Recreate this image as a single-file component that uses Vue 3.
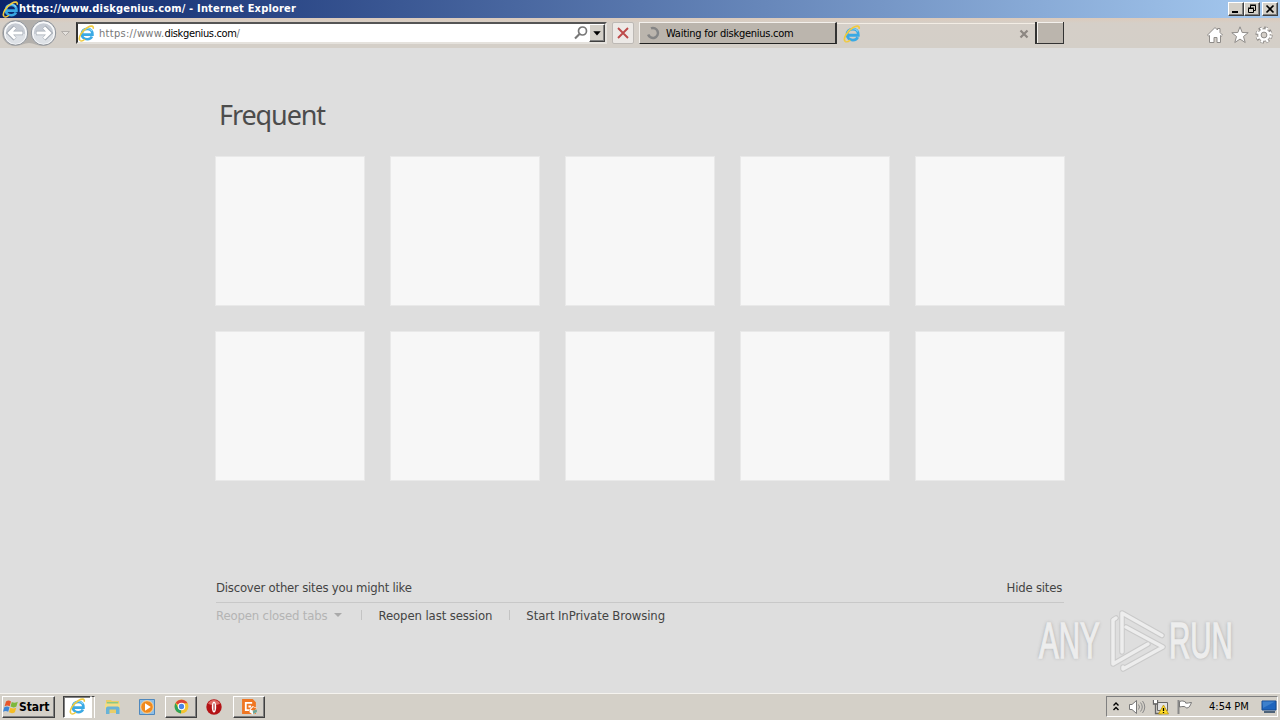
<template>
  <div class="screen">
    <svg class="defs" aria-hidden="true">
      <symbol id="ie" viewBox="0 0 16 16">
        <path d="M4 9.100h9.600C13.800 5.500 11.800 3.600 8.800 3.600c-3 0-5.200 2.100-5.200 4.900 0 3 2.200 4.900 5.200 4.900 2.100 0 3.600-.9 4.300-2.500" fill="none" stroke="#3aa9e4" stroke-width="2.500" />
        <path d="M4.200 6.300C5 4.500 6.700 3.300 8.800 3.300s3.600.9 4.300 2.400" fill="none" stroke="#8bd6f7" />
        <path d="M2 14.600C-.4 12.500 3.500 5.500 9 2.300c3-1.800 6-1.900 5.300 1.200" fill="none" stroke="#f0ca3e" stroke-width="1.500" />
        <path d="M2 14.600c1 .8 3 0 4.500-1.200" fill="none" stroke="#f0ca3e" stroke-width="1.300" />
      </symbol>
    </svg>

    <header class="title-bar">
      <svg class="title-icon"><use href="#ie" /></svg>
      <span class="title-text">https://www.diskgenius.com/ - Internet Explorer</span>
      <div class="window-buttons">
        <button><svg viewBox="0 0 14 12"><path d="M3 9h6" stroke="#000" stroke-width="2" /></svg></button>
        <button>
          <svg viewBox="0 0 14 12">
            <path d="M5.500 5V2.500h5v5H9M5 2h6M3.500 5.500h5v4h-5zM3 5h6" fill="none" stroke="#000" />
          </svg>
        </button>
        <button class="close"><svg viewBox="0 0 14 12"><path d="M3.500 2.500l7 7M10.500 2.500l-7 7" stroke="#000" stroke-width="1.700" /></svg></button>
      </div>
    </header>

    <nav class="toolbar">
      <svg class="nav-buttons" width="74" height="30" viewBox="0 0 74 30">
        <path d="M15 2h28a13 13 0 0 1 0 26c-6 0-9-3-14-3s-8 3-14 3a13 13 0 0 1 0-26z" fill="#b3b0ac" />
        <g v-for="cx in [15.5, 43.5]" :key="cx">
          <circle :cx="cx" cy="15" r="12.200" fill="#e9ebee" stroke="#8d9299" />
          <circle :cx="cx" cy="15" r="10.500" fill="#c6cbd3" stroke="#f8f9fa" stroke-width="1.500" />
          <path :d="`M${cx - 10} 16a10 10 0 0 0 20 0z`" fill="#dde1e6" />
        </g>
        <path d="M15 9l-6 6 6 6M9.500 15H23M44 9l6 6-6 6M49.500 15H36" fill="none" stroke="#a3aab3" stroke-width="4.400" />
        <path d="M15 9.500L9.500 15l5.500 5.500M10 15h12.500M44 9.500l5.500 5.500-5.500 5.500M49 15H36.500" fill="none" stroke="#fff" stroke-width="3" />
        <path d="M61.500 13.500h8l-4 4z" fill="#e5e2de" stroke="#b2aeaa" />
      </svg>

      <div class="address">
        <svg class="page-icon"><use href="#ie" /></svg>
        <span class="url">https://www.<b>diskgenius.com</b>/</span>
        <svg class="search" viewBox="0 0 16 16">
          <circle cx="9.500" cy="6" r="4" fill="none" stroke="#777" stroke-width="1.700" />
          <path d="M6.500 9L2 13.500" stroke="#777" stroke-width="2.200" />
        </svg>
        <button class="drop"><svg viewBox="0 0 12 14"><path d="M2.500 5h7L6 8.800z" /></svg></button>
      </div>

      <div class="stop">
        <svg viewBox="0 0 20 20"><path d="M5 5l10 10M15 5L5 15" stroke="#bd4a4a" stroke-width="1.900" /></svg>
      </div>

      <div class="tab waiting">
        <svg class="spinner" viewBox="0 0 14 14">
          <path d="M5 2.400A5 5 0 1 1 2.200 8.500" fill="none" stroke="#858585" stroke-width="2.500" />
        </svg>
        <span>Waiting for diskgenius.com</span>
      </div>
      <div class="tab current">
        <svg class="tab-icon"><use href="#ie" /></svg>
        <svg class="tab-close" viewBox="0 0 10 10"><path d="M1.500 1.500l7 7M8.500 1.500l-7 7" stroke="#8c8782" stroke-width="2.200" /></svg>
      </div>
      <div class="new-tab"></div>

      <div class="tools">
        <svg viewBox="0 0 18 18">
          <path d="M1.500 9L9 1.500l2.500 2.500V2.500H14v4L16.500 9l-1.200 1.200-.8-.7v7H11v-5H8v5H3.500v-7l-.8.700z" fill="#fff" stroke="#8e8b88" />
        </svg>
        <svg viewBox="0 0 18 18">
          <path d="M9 .8l2.200 5.700 6 .2-4.700 3.800 1.700 6L9 13.100l-5.200 3.400 1.700-6L.8 6.700l6-.2z" fill="#fff" stroke="#8e8b88" />
        </svg>
        <svg viewBox="0 0 18 18">
          <circle cx="9" cy="9" r="6.800" fill="none" stroke="#8e8b88" stroke-width="3.600" stroke-dasharray="3.200 2.140" />
          <circle cx="9" cy="9" r="6.300" fill="#fff" stroke="#8e8b88" />
          <circle cx="9" cy="9" r="6.600" fill="none" stroke="#fff" stroke-width="2.600" stroke-dasharray="2.200 3.140" stroke-dashoffset="-.5" />
          <circle cx="9" cy="9" r="2.900" fill="#d4cfc8" stroke="#8e8b88" />
        </svg>
      </div>
    </nav>

    <main class="page">
      <h1>Frequent</h1>
      <div class="tiles">
        <div v-for="n in 10" :key="n" class="tile"></div>
      </div>
      <div class="discover">
        <span>Discover other sites you might like</span>
        <span class="hide">Hide sites</span>
      </div>
      <div class="links">
        <span class="disabled">Reopen closed tabs</span>
        <i class="arrow"></i>
        <i class="separator"></i>
        <span>Reopen last session</span>
        <i class="separator"></i>
        <span>Start InPrivate Browsing</span>
      </div>

      <div class="watermark">
        <span class="any">ANY</span>
        <svg width="60" height="66" viewBox="0 0 60 66">
          <g fill="none" stroke-linejoin="round" stroke-linecap="round">
            <g class="edge">
              <path d="M14 44V5l40 22.500" />
              <path d="M8 10l-3 2v44l35-20" />
              <path d="M18 19l37 20-40 22v-2" />
            </g>
            <g class="line">
              <path d="M14 44V5l40 22.500" />
              <path d="M8 10l-3 2v44l35-20" />
              <path d="M18 19l37 20-40 22v-2" />
            </g>
          </g>
        </svg>
        <span class="run">RUN</span>
      </div>
    </main>

    <footer class="taskbar">
      <button class="start">
        <svg viewBox="0 0 16 16">
          <path d="M3 2.500C5 1 6.500 1.500 8 2.500L6.700 7.300C5 6.300 3.500 6.300 1.600 7.300z" fill="#e8562a" />
          <path d="M8.800 3c1.700 1 3.600 1 6-.2l-1.400 4.800c-2.200 1.200-4 1-5.900 0z" fill="#7db83a" />
          <path d="M1.300 8.300c1.800-1 3.500-1 5.200 0l-1.300 4.500c-1.700-1-3.400-1-5.200 0z" fill="#3e86d6" />
          <path d="M7.300 8.700c2 1 3.700 1 5.900 0l-1.300 4.600c-2.200 1.200-4 1-5.900 0z" fill="#f5bd25" />
        </svg>
        Start
      </button>
      <div class="task pressed"><svg><use href="#ie" /></svg></div>
      <i class="stack"></i>
      <svg class="explorer" viewBox="0 0 18 18">
        <path d="M2 2h5l1 1h7v12H2z" fill="#e9cd68" />
        <path d="M3 4h11v3H3z" fill="#8dc980" />
        <path d="M1 5.500h15V11H1z" fill="#f3dc88" />
        <path d="M2 16v-5.500C2 9 3 8.500 5 8.500h7.500c2 0 3 .5 3 2V16H12v-4.500H5.500V16z" fill="#68b3d8" />
      </svg>
      <svg class="media" viewBox="0 0 18 18">
        <path d="M1.500 1.500h15v15h-15z" fill="#8fbfe6" stroke="#4f88bd" />
        <circle cx="9" cy="9" r="6.300" fill="#f08a1d" stroke="#fbd7a1" />
        <path d="M7 5.300v7.400L12.800 9z" fill="#fff" />
      </svg>
      <div class="task">
        <svg viewBox="0 0 16 16">
          <circle cx="8" cy="8" r="6.500" fill="#f4c430" />
          <path d="M8 8L2.400 4.700A6.500 6.500 0 0 1 13.700 5H8z" fill="#dc4437" />
          <path d="M8 8l-.5 6.500A6.500 6.500 0 0 1 2.400 4.700L5 9.500z" fill="#2da35a" />
          <circle cx="8" cy="8" r="3" fill="#4b86e8" stroke="#fff" />
        </svg>
      </div>
      <svg class="opera" viewBox="0 0 18 18">
        <circle cx="9" cy="9" r="7.700" fill="#b41316" />
        <path d="M3 5.500a7 7 0 0 1 12 0c-3 2-9 2-12 0z" fill="#df6963" />
        <ellipse cx="9" cy="9" rx="2.200" ry="5.500" fill="#fff" />
        <path d="M9 5.500v7" stroke="#a51013" />
      </svg>
      <div class="task last">
        <svg viewBox="0 0 16 16">
          <path d="M1 1h10l3 3v11H1z" fill="#ef7622" />
          <path d="M10.500 4.500H4.500v7h3M7 8h2.500" fill="none" stroke="#fff" stroke-width="1.700" />
          <path d="M8 10.500l3-3 4 2v4l-4 2-3-2z" fill="#fff" />
          <path d="M9 11l2.500-2.500L15 10l-3 2z" fill="#ef7622" />
          <path d="M11 12l4-1.500v3L11.500 15z" fill="#70a596" />
        </svg>
      </div>

      <div class="tray">
        <svg class="chevrons" viewBox="0 0 8 12"><path d="M1.500 4.500L4 2l2.500 2.500M1.500 9L4 6.500 6.500 9" fill="none" stroke="#000" stroke-width="1.400" /></svg>
        <svg class="speaker" viewBox="0 0 18 16">
          <path d="M1.500 5.500H4l4.500-4v13L4 10.500H1.500z" fill="#fff" stroke="#777" />
          <path d="M10.500 5.500q2 2.500 0 5M12.500 3.500q3.500 4.500 0 9M14.500 2q4.500 6 0 12" fill="none" stroke="#888" />
        </svg>
        <svg class="network" viewBox="0 0 18 16">
          <path d="M5.500 3.500h10v8h-10z" fill="#e3e3e3" stroke="#666" />
          <path d="M1.500 1v4h4V1M3.500 5v9.500h6" fill="none" stroke="#666" stroke-width="1.300" />
          <path d="M2 1h3v3H2z" fill="#fff" />
          <path d="M11.500 6l5 9h-10z" fill="#ffdc28" stroke="#b38a00" stroke-width=".7" />
          <path d="M11.500 9v3M11.500 13v1" stroke="#000" stroke-width="1.300" />
        </svg>
        <svg class="flag" viewBox="0 0 18 16">
          <path d="M2.500 1v14" stroke="#888" stroke-width="2" />
          <path d="M3.500 2.500c3-1 4-.5 6 .5v1c2 .5 4-.5 6-.5-1 2-2 5.500-4.500 5.500-1.500 0-1.500-1.500-3-1.500s-3 0-4.500.5z" fill="#fff" stroke="#777" />
        </svg>
        <span class="clock">4:54 PM</span>
        <svg class="desktop" viewBox="0 0 16 14">
          <path d="M1 1h14v9H1z" fill="#1f65bd" stroke="#174a8e" />
          <path d="M1.500 1.500H14L2 8z" fill="#3d80cc" />
          <path d="M3 12h11" stroke="#4d6278" stroke-width="2" />
        </svg>
      </div>
    </footer>
  </div>
</template>

<script setup>
</script>

<style>
body {
  margin: 0;
  overflow: hidden;
}
</style>

<style scoped>
.screen {
  width: 1280px;
  height: 720px;
  display: flex;
  flex-direction: column;
  background: #dedede;
  color: #000;
  font-family: "DejaVu Sans Condensed", "DejaVu Sans", sans-serif;
  font-stretch: condensed;
  font-size: 11px;
  white-space: nowrap;
}

.screen * {
  box-sizing: border-box;
}

svg {
  display: block;
  flex: none;
}

.defs {
  position: absolute;
  width: 0;
  height: 0;
}

button {
  padding: 0;
  margin: 0;
  font-family: inherit;
  background: #d4d0c8;
  border: 1px solid;
  border-color: #fff #404040 #404040 #fff;
  box-shadow: inset -1px -1px #808080;
}

.title-bar {
  height: 18px;
  flex: none;
  display: flex;
  align-items: center;
  padding: 0 2px;
  background: linear-gradient(90deg, #0a246a, #a6caf0);
}

.title-icon {
  width: 17px;
  height: 17px;
}

.title-text {
  color: #fff;
  font-weight: bold;
  letter-spacing: 0.18px;
  line-height: 18px;
}

.window-buttons {
  margin-left: auto;
  display: flex;
}

.window-buttons button {
  width: 16px;
  height: 14px;
}

.window-buttons svg {
  width: 14px;
  height: 12px;
}

.window-buttons .close {
  margin-left: 2px;
}

.toolbar {
  height: 30px;
  flex: none;
  display: flex;
  background: linear-gradient(#dccabb, #d5cfc8 5px, #d4cfc8);
}

.address {
  width: 531px;
  height: 22px;
  margin: 4px 0 0 2px;
  display: flex;
  align-items: center;
  background: #fff;
  border: 2px solid;
  border-color: #555 #e5e2dd #e5e2dd #333;
}

.page-icon {
  width: 17px;
  height: 17px;
}

.url {
  margin-left: 4px;
  color: #777;
  letter-spacing: 0.3px;
}

.url b {
  color: #000;
  font-weight: normal;
  letter-spacing: -0.36px;
}

.search {
  width: 16px;
  height: 16px;
  margin-left: auto;
}

.drop {
  width: 16px;
  height: 18px;
}

.drop svg {
  width: 14px;
  height: 15px;
}

.stop {
  width: 22px;
  height: 22px;
  margin: 4px 0 0 5px;
  background: #ece9e6;
  border: 1px solid #bdb9b5;
  border-radius: 2px;
}

.stop svg {
  width: 20px;
  height: 20px;
}

.tab {
  display: flex;
  align-items: center;
}

.waiting {
  width: 198px;
  height: 22px;
  margin: 4px 0 0 5px;
  padding-left: 6px;
  background: #bbb5ad;
  border: solid;
  border-width: 1px 2px 1px 1px;
  border-color: #f3f0ec #333 #222 #f3f0ec;
  letter-spacing: -0.25px;
}

.spinner {
  width: 14px;
  height: 14px;
  margin-right: 6px;
}

.current {
  width: 198px;
  height: 21px;
  margin-top: 5px;
  padding-left: 6px;
  border-top: 1px solid #f3ede5;
}

.tab-icon {
  width: 18px;
  height: 18px;
}

.tab-close {
  width: 10px;
  height: 10px;
  margin: 0 6px 0 auto;
}

.new-tab {
  width: 29px;
  height: 22px;
  margin-top: 4px;
  background: #bbb5ad;
  border: solid #333;
  border-width: 0 1px 1px 2px;
  box-shadow: inset 1px 1px #f3f0ec;
}

.tools {
  margin: 8px 7px 0 auto;
  display: flex;
  gap: 6.500px;
}

.tools svg {
  width: 18px;
  height: 18px;
}

.page {
  flex: 1;
  min-height: 0;
  position: relative;
  padding: 48px 216px 0;
  color: #444;
}

h1 {
  margin: 0 0 0 3px;
  height: 61px;
  font-family: "Noto Sans", sans-serif;
  font-stretch: normal;
  font-weight: normal;
  font-size: 27px;
  letter-spacing: -1.1px;
  line-height: 38px;
  color: #4c4c4c;
}

.tiles {
  display: grid;
  grid-template-columns: repeat(5, 148px);
  grid-auto-rows: 148px;
  gap: 27px;
}

.tile {
  background: #f7f7f7;
  box-shadow: 0 0 0 1px #e9e9e9;
}

.discover {
  height: 25px;
  margin-top: 98px;
  display: flex;
  justify-content: space-between;
  font-size: 13px;
  letter-spacing: -0.22px;
  line-height: 20px;
  border-bottom: 1px solid #c8c8c8;
}

.hide {
  margin-right: 2px;
}

.links {
  display: flex;
  align-items: center;
  height: 24px;
  font-size: 13px;
  letter-spacing: -0.1px;
}

.disabled {
  color: #b4b4b4;
  letter-spacing: -0.15px;
}

.arrow {
  margin: 0 2px 0 7px;
  border: 4px solid transparent;
  border-top-color: #aaa;
  border-bottom: 0;
}

.separator {
  width: 1px;
  height: 10px;
  margin: 0 16px 0 17px;
  background: #c3c3c3;
}

.watermark {
  position: absolute;
  left: 1039px;
  top: 560px;
  height: 66px;
  display: flex;
  align-items: center;
  font-family: "Liberation Sans", sans-serif;
  font-stretch: normal;
  font-size: 50px;
  color: #ededed;
  -webkit-text-stroke: 1.5px #ededed;
  text-shadow: 0 0 5px #999;
}

.watermark span {
  transform: scaleX(0.59);
  transform-origin: left;
}

.any {
  width: 69px;
}

.run {
  width: 65px;
  margin-left: 1px;
}

.edge {
  stroke: #cacaca;
  stroke-width: 5.500;
}

.line {
  stroke: #ededed;
  stroke-width: 3.500;
}

.taskbar {
  height: 27px;
  flex: none;
  display: flex;
  align-items: center;
  padding: 1px 2px 2px;
  background: #d4d0c8;
  border-top: 1px solid #f5f3ef;
}

.start {
  width: 53px;
  height: 22px;
  display: flex;
  align-items: center;
  padding-left: 0;
  font-size: 12px;
  font-weight: bold;
  letter-spacing: -0.1px;
}

.start svg {
  width: 16px;
  height: 16px;
}

.task {
  width: 32px;
  height: 22px;
  display: flex;
  align-items: center;
  justify-content: center;
  border: 1px solid;
  border-color: #fff #404040 #404040 #fff;
  box-shadow: inset -1px -1px #808080;
}

.task svg {
  width: 17px;
  height: 17px;
}

.pressed {
  width: 28px;
  margin-left: 8px;
  background: #fff;
  border-color: #404040 #fff #fff #404040;
  box-shadow: inset 1px 1px #808080;
}

.stack {
  width: 4px;
  height: 22px;
  border: solid;
  border-width: 1px 1px 0;
  border-color: #404040 #fff;
}

.explorer,
.media,
.opera {
  width: 18px;
  height: 18px;
}

.explorer {
  margin-left: 9px;
}

.media {
  margin: 0 9px 0 16px;
}

.opera {
  margin: 0 10px 0 8px;
}

.tray {
  width: 172px;
  height: 21px;
  margin-left: auto;
  display: flex;
  align-items: center;
  padding-left: 5px;
  border: 1px solid;
  border-color: #808080 #fff #fff #808080;
}

.chevrons {
  width: 8px;
  height: 12px;
}

.speaker,
.network,
.flag {
  width: 18px;
  height: 16px;
}

.speaker {
  margin-left: 8px;
}

.network,
.flag {
  margin-left: 6px;
}

.clock {
  margin-left: 15px;
}

.desktop {
  width: 16px;
  height: 14px;
  margin-left: auto;
}
</style>
